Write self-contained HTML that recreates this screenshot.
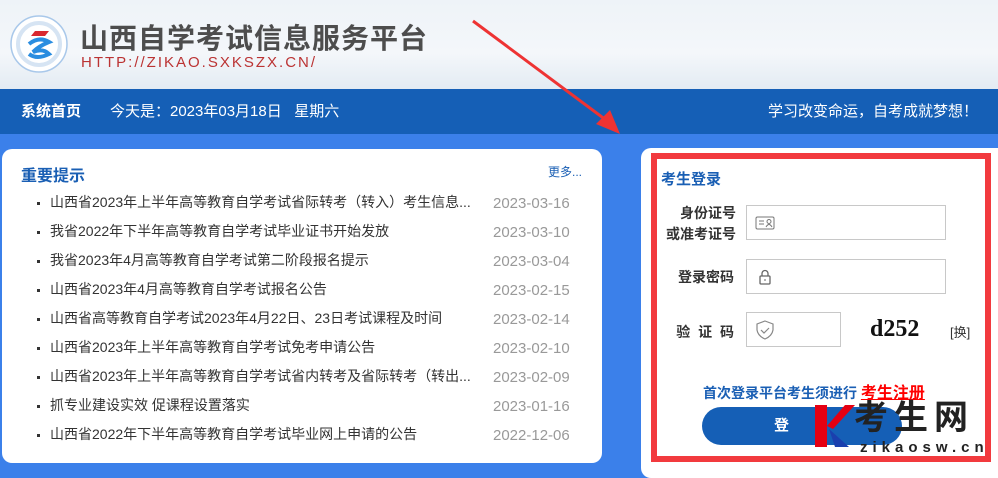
<!DOCTYPE html>
<html><head><meta charset="utf-8"><style>
*{margin:0;padding:0;box-sizing:border-box}
body{width:998px;height:465px;overflow:hidden;position:relative;font-family:"Liberation Sans","Noto Sans CJK SC",sans-serif;background:#3b80ea}
.hdr{position:absolute;left:0;top:0;width:998px;height:89px;background:linear-gradient(180deg,#eef3f8 0%,#f4f7fa 60%,#e3ebf3 100%)}
.nav{position:absolute;left:0;top:89px;width:998px;height:45px;background:#155fb6;color:#fff;font-size:15px;line-height:45px}
.panel{position:absolute;background:#fff;border-radius:10px}
.item{position:absolute;left:37px;font-size:14px;color:#333;white-space:nowrap;line-height:20px;height:20px}
.item b{display:inline-block;width:3px;height:3px;background:#333;margin-right:10px;vertical-align:middle}
.date{position:absolute;left:493px;font-size:15px;color:#999;line-height:20px;height:20px;margin-top:2px}
.inp{position:absolute;border:1px solid #c8c8c8;background:#fff}
.lbl{position:absolute;font-size:14px;color:#333;font-weight:bold;text-align:right}
</style></head><body>
<div class="hdr">
<svg style="position:absolute;left:9px;top:14px" width="60" height="60" viewBox="0 0 60 60"><circle cx="30" cy="30" r="28" fill="#fff" stroke="#a9c8ea" stroke-width="1.5"/><circle cx="30" cy="30" r="21" fill="none" stroke="#d6e4f3" stroke-width="4"/><path d="M26 17 L40 17 L36 22 L22 22Z" fill="#d9282f"/><path d="M20 30 Q30 22 40 28 Q30 32 24 38 Q34 34 40 40 Q28 46 20 40" fill="none" stroke="#2a8de0" stroke-width="4"/></svg>
<div style="position:absolute;left:80px;top:17px;font-size:28px;font-weight:bold;color:#4d4d4d;letter-spacing:1px">山西自学考试信息服务平台</div>
<div style="position:absolute;left:81px;top:54px;font-size:15px;color:#b33;letter-spacing:2px">HTTP://ZIKAO.SXKSZX.CN/</div>
</div>
<div class="nav"><span style="position:absolute;left:21px;font-weight:bold">系统首页</span><span style="position:absolute;left:110px">今天是：2023年03月18日 &nbsp; 星期六</span><span style="position:absolute;right:20px">学习改变命运，自考成就梦想！</span></div>
<div class="panel" style="left:2px;top:149px;width:600px;height:314px"></div>
<div style="position:absolute;left:21px;top:162px;font-size:16px;font-weight:bold;color:#1a5fb4">重要提示</div>
<div style="position:absolute;left:548px;top:163px;font-size:12px;color:#1a5fb4">更多...</div>
<div class="item" style="top:192px"><b></b>山西省2023年上半年高等教育自学考试省际转考（转入）考生信息...</div><div class="date" style="top:192px">2023-03-16</div>
<div class="item" style="top:221px"><b></b>我省2022年下半年高等教育自学考试毕业证书开始发放</div><div class="date" style="top:221px">2023-03-10</div>
<div class="item" style="top:250px"><b></b>我省2023年4月高等教育自学考试第二阶段报名提示</div><div class="date" style="top:250px">2023-03-04</div>
<div class="item" style="top:279px"><b></b>山西省2023年4月高等教育自学考试报名公告</div><div class="date" style="top:279px">2023-02-15</div>
<div class="item" style="top:308px"><b></b>山西省高等教育自学考试2023年4月22日、23日考试课程及时间</div><div class="date" style="top:308px">2023-02-14</div>
<div class="item" style="top:337px"><b></b>山西省2023年上半年高等教育自学考试免考申请公告</div><div class="date" style="top:337px">2023-02-10</div>
<div class="item" style="top:366px"><b></b>山西省2023年上半年高等教育自学考试省内转考及省际转考（转出...</div><div class="date" style="top:366px">2023-02-09</div>
<div class="item" style="top:395px"><b></b>抓专业建设实效 促课程设置落实</div><div class="date" style="top:395px">2023-01-16</div>
<div class="item" style="top:424px"><b></b>山西省2022年下半年高等教育自学考试毕业网上申请的公告</div><div class="date" style="top:424px">2022-12-06</div>

<div class="panel" style="left:641px;top:148px;width:370px;height:330px"></div>
<div style="position:absolute;left:651px;top:153px;width:340px;height:309px;border:6px solid #f23a3e"></div>
<div style="position:absolute;left:661px;top:168px;font-size:15px;font-weight:bold;color:#1a5fb4">考生登录</div>
<div class="lbl" style="left:660px;top:203px;width:76px;line-height:21px">身份证号<br>或准考证号</div>
<div class="inp" style="left:746px;top:205px;width:200px;height:35px"><svg style="position:absolute;left:8px;top:10px" width="20" height="14"><rect x="1" y="1" width="18" height="12" rx="1.5" fill="none" stroke="#777"/><line x1="4" y1="5" x2="9" y2="5" stroke="#777"/><line x1="4" y1="8" x2="9" y2="8" stroke="#777"/><circle cx="14" cy="5.5" r="2" fill="none" stroke="#777"/><path d="M11 11 Q14 6 17 11" fill="none" stroke="#777"/></svg></div>
<div class="lbl" style="left:660px;top:267px;width:74px">登录密码</div>
<div class="inp" style="left:746px;top:259px;width:200px;height:35px"><svg style="position:absolute;left:12px;top:9px" width="12" height="16"><path d="M3 7 V4.5 a3 3 0 0 1 6 0 V7" fill="none" stroke="#666" stroke-width="1.3"/><rect x="1" y="7" width="10" height="8" rx="1" fill="none" stroke="#666" stroke-width="1.3"/><line x1="6" y1="10" x2="6" y2="12" stroke="#666"/></svg></div>
<div class="lbl" style="left:660px;top:322px;width:74px;word-spacing:4px">验 证 码</div>
<div class="inp" style="left:746px;top:312px;width:95px;height:35px"><svg style="position:absolute;left:9px;top:7px" width="18" height="20"><path d="M9 1 L17 4 V10 Q16 16 9 19 Q2 16 1 10 V4Z" fill="none" stroke="#888" stroke-width="1.2"/><path d="M5 10 L8 13 L13 8" fill="none" stroke="#888" stroke-width="1.2"/></svg></div>
<div style="position:absolute;left:870px;top:316px;font-family:'Liberation Serif',serif;font-size:24px;font-weight:bold;color:#111">d252</div>
<div style="position:absolute;left:950px;top:322px;font-size:13px;color:#333">[换]</div>
<div style="position:absolute;left:703px;top:379px;font-size:14px;color:#1a5fb4;font-weight:bold">首次登录平台考生须进行 <span style="color:#f00;font-size:16px;text-decoration:underline">考生注册</span></div>
<div style="position:absolute;left:702px;top:407px;width:200px;height:38px;border-radius:19px;background:#155fb6;color:#fff;font-weight:bold;font-size:15px;line-height:38px;padding-left:72px">登</div>
<svg style="position:absolute;left:815px;top:405px" width="40" height="42"><path d="M0 0 H12 V42 H0Z" fill="#e50012"/><path d="M12 21 L30 0 H40 L18 24Z" fill="#e50012"/><path d="M14 24 L34 42 H20Z" fill="#1a3fae"/></svg>
<div style="position:absolute;left:854px;top:398px;font-size:34px;line-height:40px;font-weight:bold;color:#222;letter-spacing:6px">考生网</div>
<div style="position:absolute;left:860px;top:439px;font-size:15px;font-weight:bold;color:#222;letter-spacing:5px">zikaosw.cn</div>
<svg style="position:absolute;left:470px;top:18px" width="160" height="120"><line x1="3" y1="3" x2="140" y2="105" stroke="#e33" stroke-width="3"/><path d="M150 116 L126 106 L140 92Z" fill="#e33"/></svg>
</body></html>
